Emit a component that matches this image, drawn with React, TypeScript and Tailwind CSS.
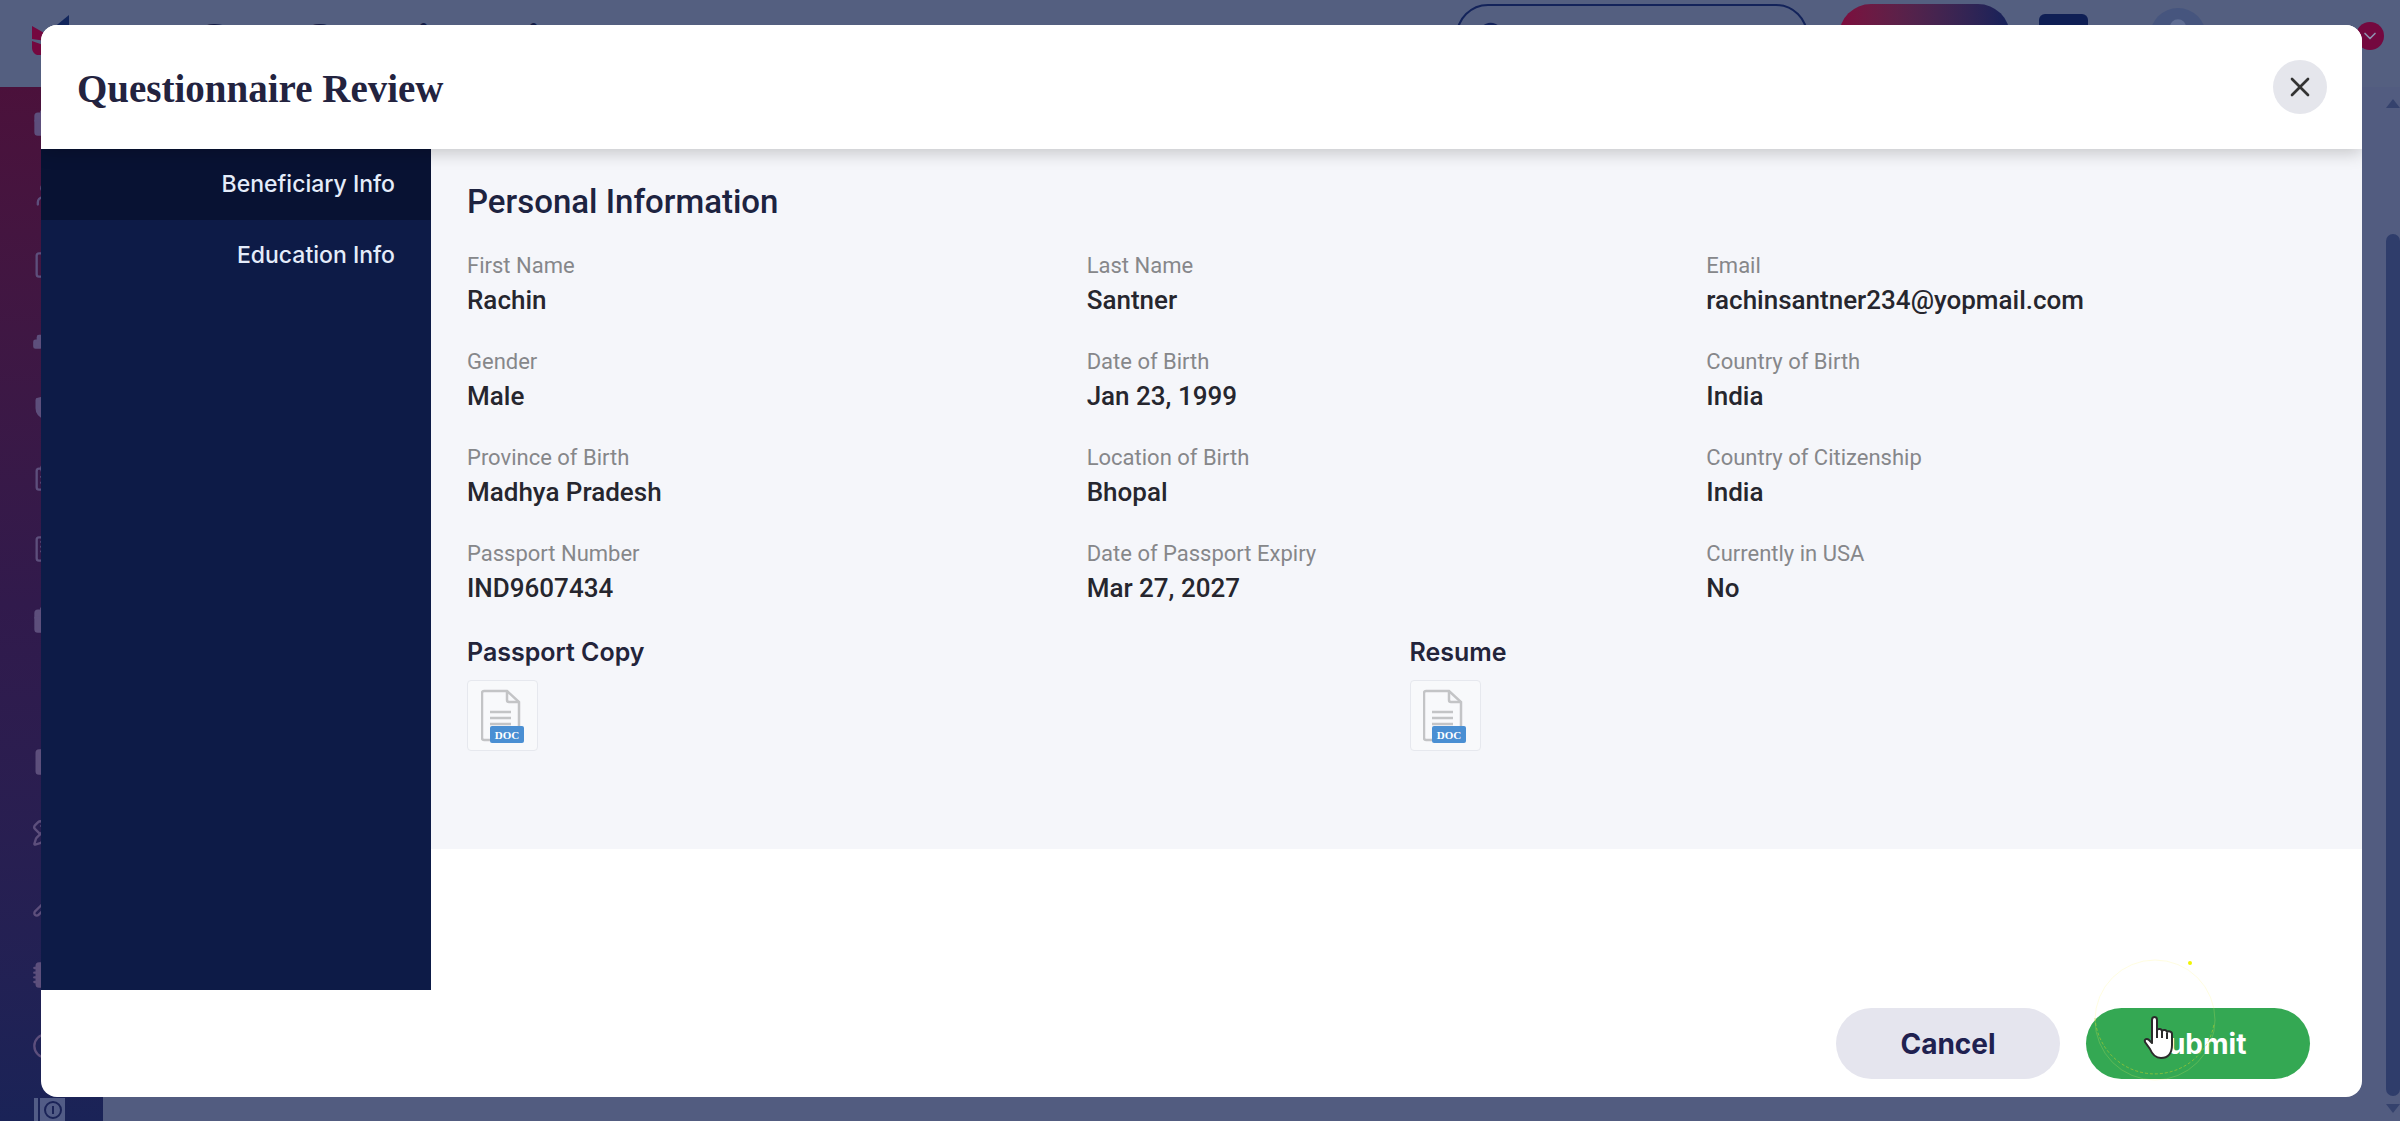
import { useState } from 'react';
import {
  Building,
  Calendar,
  ChevronDown,
  ChevronLeft,
  Circle,
  ClipboardList,
  FileText,
  Network,
  NotebookText,
  PencilRuler,
  Search,
  Shield,
  Tablet,
  User,
  Wrench,
  X,
  type LucideIcon,
} from 'lucide-react';
import clsx from 'clsx';

interface Field {
  label: string;
  value: string;
}

interface RailItem {
  icon: LucideIcon;
  filled?: boolean;
}

const SECTIONS = ['Beneficiary Info', 'Education Info'];

const FIELDS: Field[] = [
  { label: 'First Name', value: 'Rachin' },
  { label: 'Last Name', value: 'Santner' },
  { label: 'Email', value: 'rachinsantner234@yopmail.com' },
  { label: 'Gender', value: 'Male' },
  { label: 'Date of Birth', value: 'Jan 23, 1999' },
  { label: 'Country of Birth', value: 'India' },
  { label: 'Province of Birth', value: 'Madhya Pradesh' },
  { label: 'Location of Birth', value: 'Bhopal' },
  { label: 'Country of Citizenship', value: 'India' },
  { label: 'Passport Number', value: 'IND9607434' },
  { label: 'Date of Passport Expiry', value: 'Mar 27, 2027' },
  { label: 'Currently in USA', value: 'No' },
];

const DOCUMENTS = ['Passport Copy', 'Resume'];

const RAIL_ITEMS: RailItem[] = [
  { icon: Calendar, filled: true },
  { icon: User },
  { icon: Tablet },
  { icon: Network, filled: true },
  { icon: Shield, filled: true },
  { icon: ClipboardList },
  { icon: Building },
  { icon: Calendar, filled: true },
  { icon: ChevronLeft },
  { icon: FileText, filled: true },
  { icon: PencilRuler },
  { icon: Wrench },
  { icon: NotebookText, filled: true },
  { icon: Circle },
];

function DocIcon() {
  return (
    <svg viewBox="1 0 44 54" className="h-[54px] w-11" aria-hidden="true">
      <path
        d="M10 51H4a2 2 0 0 1-2-2V4a2 2 0 0 1 2-2h23l12 11v25"
        fill="none"
        stroke="#c3c4c6"
        strokeWidth="2.5"
      />
      <path d="M27 2v9a2 2 0 0 0 2 2h10" fill="none" stroke="#c3c4c6" strokeWidth="2.5" />
      <path d="M10 23h21M10 29h21M10 35h21" stroke="#c3c4c6" strokeWidth="2.5" />
      <rect x="10" y="37" width="34" height="17" rx="2" fill="#4a8fd3" />
      <text
        x="27"
        y="50"
        textAnchor="middle"
        fontSize="11"
        fontWeight="700"
        fontFamily="Liberation Serif, serif"
        fill="#ffffff"
      >
        DOC
      </text>
    </svg>
  );
}

function HandCursor() {
  return (
    <svg
      viewBox="0 0 32 43"
      className="pointer-events-none absolute top-2 left-[57px] h-[43px] w-8"
      aria-hidden="true"
    >
      <path
        d="M9 4c0-4 5-4 5 0v10c1-2 5-1 5 1 1-2 5-1 5 1 1-1 5-1 5 2v11c0 8-4 13-11 13-6 0-9-4-11-9L2 26c-1-3 2-4 4-2l3 3z"
        fill="#ffffff"
        stroke="#2b2b2b"
        strokeWidth="2"
        strokeLinejoin="round"
      />
      <path d="M14 14v8M19 15v7M24 17v6" stroke="#2b2b2b" strokeWidth="2" />
    </svg>
  );
}

/** Fading ring left by a click around the pointer. */
function ClickRing() {
  return (
    <svg
      viewBox="0 0 124 124"
      className="pointer-events-none absolute -top-[50px] left-[7px] size-[124px] overflow-visible"
      aria-hidden="true"
    >
      <circle cx="62" cy="62" r="60" fill="none" stroke="#fff76b" strokeOpacity="0.2" />
      <path
        d="M2 60a60 60 0 0 0 119 6"
        fill="none"
        stroke="#c3cf2a"
        strokeOpacity="0.55"
        strokeDasharray="3 2"
      />
      <circle cx="97" cy="5" r="2" fill="#f1f500" />
    </svg>
  );
}

/** Page behind the dialog, already dimmed. */
function Backdrop() {
  return (
    <div className="absolute inset-0 flex flex-col bg-[#525c80]" aria-hidden="true">
      <div className="flex h-[87px] shrink-0 items-start bg-[#545f80] pr-4 pl-8">
        <svg viewBox="0 0 40 64" className="h-16 w-10">
          <path d="M0 26l14 8v7L0 39zM0 41l14 5v9H5c-3-1-5-4-5-7z" fill="#74083f" />
          <path d="M37 15v14H20z" fill="#12265c" />
        </svg>
        <div className="ml-[124px] pt-3 font-['Liberation_Serif',serif] text-[46px] leading-[56px] font-bold text-[#131b45]">
          Case Questionnaire
        </div>
        <div className="mt-1 ml-auto flex h-16 items-center">
          <div className="flex h-16 w-88 items-center rounded-full border-2 border-[#13235a] pl-[18px]">
            <Search className="size-8 text-[#13235a]" />
          </div>
          <div className="ml-[31px] h-16 w-[171px] rounded-full bg-linear-to-r from-[#7e0a3d] to-[#14215a]" />
          <div className="ml-[29px] h-11 w-[49px] rounded-md bg-[#0f1f55]" />
          <div className="ml-[62px] flex size-14 items-center justify-center overflow-hidden rounded-full bg-[#46557e]">
            <User className="size-10 fill-[#5f6d93] text-[#5f6d93]" />
          </div>
          <div className="ml-[150px] flex size-7 items-center justify-center rounded-full bg-[#74083f]">
            <ChevronDown className="size-5 text-[#8f93b0]" />
          </div>
        </div>
      </div>
      <div className="flex grow justify-between">
        <div className="flex w-[103px] flex-col bg-linear-to-b from-[#4b113b] via-[#311a4c] to-[#1a2357] pl-8">
          {RAIL_ITEMS.map(({ icon: RailIcon, filled }, i) => (
            <div key={i} className="flex h-[71px] items-center">
              <RailIcon
                className={clsx('size-7 text-[#5d4f7c]', filled && 'fill-[#5d4f7c]')}
                strokeWidth={2}
              />
            </div>
          ))}
          <svg viewBox="0 0 34 23" className="mt-[17px] h-[23px] w-[34px]">
            <path d="M2 0h4v23H2zM8 0h25v23H8z" fill="#525c86" />
            <circle cx="21" cy="12" r="8" fill="none" stroke="#1a2357" strokeWidth="2" />
            <path d="M21 8v8" stroke="#1a2357" strokeWidth="2" />
          </svg>
        </div>
        <div className="flex w-[14px] flex-col pt-3 pb-2">
          <svg viewBox="0 0 14 9" className="h-[9px] w-[14px]">
            <path d="M7 0l7 9H0z" fill="#35426d" />
          </svg>
          <div className="mt-[126px] grow rounded-full bg-[#2f3d6b]" />
          <svg viewBox="0 0 14 9" className="mt-2 h-[9px] w-[14px]">
            <path d="M0 0h14L7 9z" fill="#35426d" />
          </svg>
        </div>
      </div>
    </div>
  );
}

export default function App() {
  const [active, setActive] = useState(SECTIONS[0]);

  return (
    <div className="relative min-h-screen overflow-hidden font-['Roboto',sans-serif]">
      <Backdrop />
      <div className="relative flex min-h-screen pt-[25px] pr-[38px] pb-6 pl-[41px]">
        <section
          role="dialog"
          aria-labelledby="review-title"
          className="flex grow flex-col overflow-hidden rounded-2xl bg-white"
        >
          <header className="relative z-10 flex h-[124px] items-center justify-between bg-white pr-[35px] pl-9 shadow-[0_4px_16px_rgba(0,0,0,0.2)]">
            <h1
              id="review-title"
              className="pt-1 font-['Liberation_Serif',serif] text-[39px] font-bold text-[#23233f]"
            >
              Questionnaire Review
            </h1>
            <button
              type="button"
              aria-label="Close"
              className="flex size-[54px] items-center justify-center rounded-full bg-[#e5e6ec] text-[#333]"
            >
              <X className="size-8" strokeWidth={2} />
            </button>
          </header>

          <div className="flex grow">
            <nav className="flex w-[390px] shrink-0 flex-col bg-[#0d1b47]">
              {SECTIONS.map((section) => (
                <button
                  key={section}
                  type="button"
                  onClick={() => setActive(section)}
                  className={clsx(
                    "h-[71px] pr-9 text-right font-['Inter',sans-serif] text-[23px] font-medium text-[#e4ecfa]",
                    active === section && 'bg-[#081233]',
                  )}
                >
                  {section}
                </button>
              ))}
            </nav>

            <div className="grow">
              <div className="bg-[#f5f6fa] px-9 pt-8 pb-[98px]">
                <h2 className="text-[33px] leading-[42px] font-medium text-[#1d2340]">
                  Personal Information
                </h2>
                <dl className="mt-[27px] grid grid-cols-3 gap-y-7">
                  {FIELDS.map((field) => (
                    <div key={field.label}>
                      <dt className="text-[22px] leading-8 text-[#86878a]">{field.label}</dt>
                      <dd className="text-[26px] leading-9 font-medium text-[#26262e]">
                        {field.value}
                      </dd>
                    </div>
                  ))}
                </dl>
                <div className="mt-7 grid grid-cols-2 gap-x-[26px]">
                  {DOCUMENTS.map((name) => (
                    <div key={name}>
                      <h3 className="font-['Inter',sans-serif] text-[25px] leading-9 font-semibold text-[#23243a]">
                        {name}
                      </h3>
                      <a
                        href="#document"
                        aria-label={name}
                        className="mt-[10px] flex size-[71px] items-center justify-center rounded-sm border border-[#e6e8ee] bg-[#f8f9fb]"
                      >
                        <DocIcon />
                      </a>
                    </div>
                  ))}
                </div>
              </div>
            </div>
          </div>

          <footer className="flex justify-end gap-[26px] px-[52px] py-[18px] font-['Inter',sans-serif] text-[28px] font-bold">
            <button type="button" className="h-[71px] w-56 rounded-full bg-[#e5e5ee] text-[#1f2150]">
              Cancel
            </button>
            <div className="relative">
              <button type="button" className="h-[71px] w-56 rounded-full bg-[#34a853] text-white">
                Submit
              </button>
              <ClickRing />
              <HandCursor />
            </div>
          </footer>
        </section>
      </div>
    </div>
  );
}
